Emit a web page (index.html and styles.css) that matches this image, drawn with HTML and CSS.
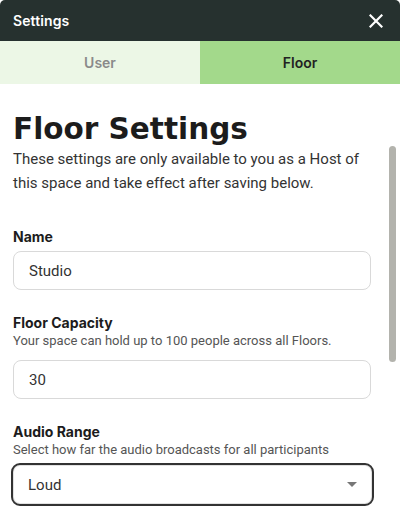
FILE: index.html
```html
<!DOCTYPE html>
<html lang="en">
<head>
<meta charset="utf-8">
<title>Settings</title>
<link rel="stylesheet" href="styles.css">
</head>
<body>
<div class="panel">
  <header class="topbar">
    <span class="topbar-title">Settings</span>
    <button class="close-btn" aria-label="Close">
      <svg width="14" height="14" viewBox="0 0 14 14"><path d="M1.5 1.5 L12.5 12.5 M12.5 1.5 L1.5 12.5" stroke="#fff" stroke-width="2.2" stroke-linecap="square" fill="none"/></svg>
    </button>
  </header>
  <nav class="tabs">
    <div class="tab tab-inactive">User</div>
    <div class="tab tab-active">Floor</div>
  </nav>
  <main class="content">
    <div class="scroll-thumb"></div>
    <h1 class="title">Floor Settings</h1>
    <p class="intro">These settings are only available to you as a Host of this space and take effect after saving below.</p>

    <div class="field field-first">
      <label class="label">Name</label>
      <div class="input">Studio</div>
    </div>

    <div class="field">
      <label class="label">Floor Capacity</label>
      <div class="help">Your space can hold up to 100 people across all Floors.</div>
      <div class="input input-after-help">30</div>
    </div>

    <div class="field">
      <label class="label">Audio Range</label>
      <div class="help">Select how far the audio broadcasts for all participants</div>
      <div class="select">
        <span>Loud</span>
        <svg class="caret" width="10" height="5" viewBox="0 0 10 5"><path d="M0 0 H10 L5 5 Z" fill="#777"/></svg>
      </div>
    </div>
  </main>
</div>
</body>
</html>
```

FILE: styles.css
```css
html, body {
  margin: 0;
  padding: 0;
  background: #ffffff;
}
body {
  font-family: Inter, "Noto Sans", "Liberation Sans", sans-serif;
  color: #222;
}
.panel {
  width: 400px;
  height: 528px;
  border-radius: 5px 5px 0 0;
  overflow: hidden;
  background: #fff;
  display: flex;
  flex-direction: column;
}
.topbar {
  height: 41px;
  background: #26312f;
  display: flex;
  align-items: center;
  justify-content: space-between;
  padding: 0 17px 0 13px;
}
.topbar-title {
  color: #fff;
  font-size: 14px;
  font-weight: 600;
  letter-spacing: 0.1px;
}
.close-btn {
  background: none;
  border: 0;
  padding: 0;
  width: 14px;
  height: 14px;
  display: flex;
}
.tabs {
  display: flex;
  height: 43px;
}
.tab {
  flex: 1;
  display: flex;
  align-items: center;
  justify-content: center;
  font-size: 14px;
  font-weight: 600;
}
.tab-inactive {
  background: #ecf7e6;
  color: #8a8a8a;
}
.tab-active {
  background: #a3d98b;
  color: #222;
}
.content {
  position: relative;
  flex: 1;
  padding: 27px 29px 0 13px;
}
.scroll-thumb {
  position: absolute;
  right: 4px;
  top: 62px;
  width: 7px;
  height: 216px;
  border-radius: 4px;
  background: #b3b3ad;
}
.title {
  margin: 0;
  font-family: "DejaVu Sans", Inter, sans-serif;
  font-size: 29.5px;
  line-height: 36px;
  font-weight: 700;
  color: #1c1c1c;
}
.intro {
  margin: 0;
  font-family: Roboto, "Liberation Sans", sans-serif;
  font-size: 15px;
  line-height: 24px;
  color: #333;
}
.field {
  margin-top: 24px;
}
.field-first {
  margin-top: 33px;
}
.label {
  display: block;
  font-size: 14px;
  line-height: 18px;
  font-weight: 700;
  color: #1c1c1c;
}
.help {
  font-family: Roboto, "Liberation Sans", sans-serif;
  font-size: 13px;
  line-height: 16px;
  color: #555;
  margin-top: 1px;
}
.input {
  box-sizing: border-box;
  margin-top: 5px;
  width: 358px;
  height: 39px;
  border: 1px solid #d9d9d9;
  border-radius: 8px;
  padding: 0 15px;
  display: flex;
  align-items: center;
  font-family: Roboto, "Liberation Sans", sans-serif;
  font-size: 15px;
  color: #333;
}
.input-after-help {
  margin-top: 11px;
}
.select {
  box-sizing: border-box;
  margin: 5px 0 0 -2px;
  width: 363px;
  height: 43px;
  border: 2px solid #333;
  border-radius: 9px;
  box-shadow: inset 0 0 0 1px #e2e2e2;
  padding: 0 15px 0 15px;
  display: flex;
  align-items: center;
  justify-content: space-between;
  font-family: Roboto, "Liberation Sans", sans-serif;
  font-size: 15px;
  color: #333;
}
.caret {
  display: block;
}
```
